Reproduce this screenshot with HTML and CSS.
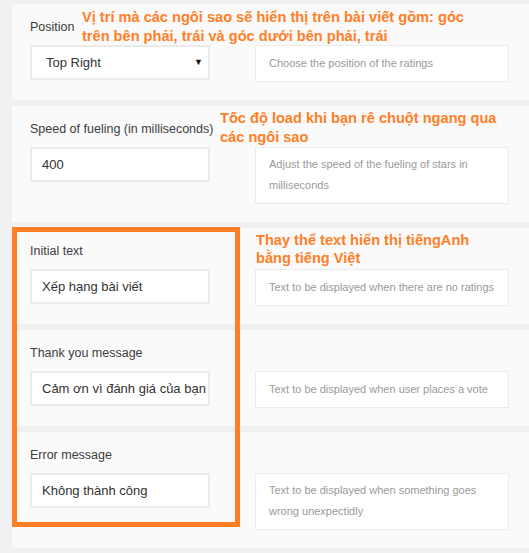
FILE: index.html
```html
<!DOCTYPE html>
<html lang="vi">
<head>
  <meta charset="UTF-8" />
  <meta name="viewport" content="width=device-width, initial-scale=1" />
  <title>Rating settings</title>
  <link rel="stylesheet" href="styles.css">
</head>
<body>

  <div class="settings">
    <div class="row">
      <label class="field-label">Position</label>
      <div class="field">
        <div class="input select">Top Right <span class="arrow">&#9660;</span></div>
        <div class="desc">Choose the position of the ratings</div>
      </div>
      <p class="note note-position">Vị trí mà các ngôi sao sẽ hiển thị trên bài viết gồm: góc<br>trên bên phải, trái và góc dưới bên phải, trái</p>
    </div>

    <div class="row">
      <label class="field-label">Speed of fueling (in milliseconds)</label>
      <div class="field">
        <div class="input">400</div>
        <div class="desc">Adjust the speed of the fueling of stars in milliseconds</div>
      </div>
      <p class="note note-speed">Tốc độ load khi bạn rê chuột ngang qua<br>các ngôi sao</p>
    </div>

    <div class="row">
      <label class="field-label">Initial text</label>
      <div class="field">
        <div class="input">Xếp hạng bài viết</div>
        <div class="desc">Text to be displayed when there are no ratings</div>
      </div>
      <p class="note note-text">Thay thể text hiển thị tiếngAnh<br>bằng tiếng Việt</p>
      <!-- orange frame drawn over the three text rows -->
      <div class="highlight"></div>
    </div>

    <div class="row">
      <label class="field-label">Thank you message</label>
      <div class="field">
        <div class="input">Cảm ơn vì đánh giá của bạn</div>
        <div class="desc">Text to be displayed when user places a vote</div>
      </div>
    </div>

    <div class="row">
      <label class="field-label">Error message</label>
      <div class="field">
        <div class="input">Không thành công</div>
        <div class="desc">Text to be displayed when something goes wrong unexpectidly</div>
      </div>
    </div>
  </div>

</body>
</html>
```

FILE: styles.css
```css
/* Page */
body {
  margin: 0;
  padding: 4px 0 4px 12px;
  background: #f1f1f1;
  font-family: "Liberation Sans", Arial, sans-serif;
  color: #333;
  overflow: hidden;
}

/* Setting rows */
.row {
  position: relative;
  background: #fafafa;
  padding: 13px 0 18px 18px;
  margin-bottom: 6px;
}

.field-label {
  display: block;
  font-size: 12.5px;
  line-height: 20px;
  color: #3c3c3c;
  margin-bottom: 8px;
}

.field {
  display: flex;
  align-items: flex-start;
  gap: 45px;
}

/* Inputs */
.input {
  box-sizing: border-box;
  width: 180px;
  height: 35px;
  border: 2px solid #ebebeb;
  background: #fff;
  padding: 0 10px;
  font-size: 13px;
  line-height: 31px;
  color: #333;
  white-space: nowrap;
}

.select {
  display: flex;
  justify-content: space-between;
  padding: 0 5px 0 14px;
}

.select .arrow {
  font-size: 9px;
  color: #111;
}

/* Help text */
.desc {
  box-sizing: border-box;
  display: flex;
  align-items: center;
  width: 254px;
  min-height: 37px;
  border: 1px solid #ececec;
  background: #fff;
  padding: 6px 13px 7px;
  font-size: 11px;
  line-height: 21px;
  color: #9a9a9a;
}

/* Orange annotations */
.note {
  position: absolute;
  margin: 0;
  font-size: 14.6px;
  font-weight: bold;
  line-height: 19px;
  color: #ff7f27;
}

.note-position {
  left: 70px;
  top: 4px;
}

.note-speed {
  left: 208px;
  top: 3px;
}

.note-text {
  left: 244px;
  top: 3px;
  line-height: 18px;
}

.highlight {
  position: absolute;
  z-index: 2;
  left: 0;
  top: -1px;
  width: 218px;
  height: 290px;
  border: 5px solid #ff7f27;
}
```
